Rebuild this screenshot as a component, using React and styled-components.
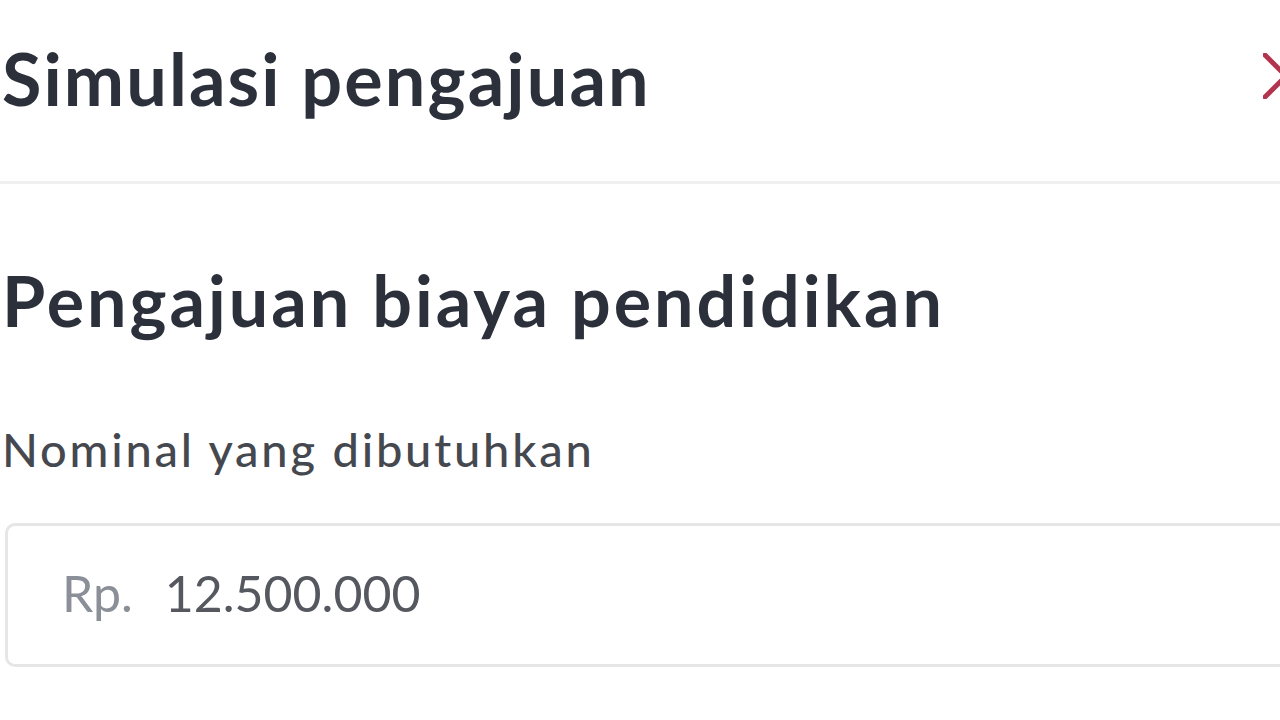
import React from "react";
import styled, { createGlobalStyle } from "styled-components";

const GlobalStyle = createGlobalStyle`
  html, body {
    margin: 0;
    padding: 0;
    background: #ffffff;
    overflow: hidden;
  }

  body {
    font-family: Lato, "Open Sans", sans-serif;
  }
`;

const Modal = styled.div`
  width: 1340px;
  background: #ffffff;
`;

const Header = styled.div`
  height: 184px;
  display: flex;
  align-items: center;
  justify-content: space-between;
  padding: 0 29px 26px 2px;
  box-sizing: border-box;
  border-bottom: 3px solid #efefef;
`;

const Title = styled.h1`
  margin: 0;
  font-size: 72px;
  line-height: 1;
  font-weight: 700;
  color: #2c303b;
  letter-spacing: 2.1px;
`;

const CloseButton = styled.button`
  width: 50px;
  height: 50px;
  padding: 0;
  border: none;
  background: none;
  display: flex;
  align-items: center;
  justify-content: center;
  margin-top: -4px;
  cursor: pointer;
`;

const Body = styled.div`
  padding: 81px 0 0 2px;
  box-sizing: border-box;
`;

const SectionTitle = styled.h2`
  margin: 0 0 91px;
  font-size: 70px;
  line-height: 1;
  font-weight: 700;
  color: #2c303b;
  letter-spacing: 3px;
`;

const Label = styled.label`
  display: block;
  margin: 0 0 50px;
  font-size: 47px;
  line-height: 1;
  font-weight: 500;
  color: #45484f;
  letter-spacing: 2.8px;
`;

const InputBox = styled.div`
  height: 144px;
  margin-left: 3px;
  display: flex;
  align-items: center;
  padding: 0 0 4px 54px;
  box-sizing: border-box;
  border: 3px solid #e6e6e6;
  border-radius: 10px;
`;

const Prefix = styled.span`
  font-size: 50px;
  color: #8b8f97;
  margin-right: 32px;
`;

const Amount = styled.span`
  font-size: 50px;
  color: #55585f;
`;

export default function App() {
  return (
    <>
      <GlobalStyle />
      <Modal>
        <Header>
          <Title>Simulasi pengajuan</Title>
          <CloseButton aria-label="Tutup">
            <svg width="46" height="46" viewBox="0 0 46 46">
              <path
                d="M2 2 L44 44 M44 2 L2 44"
                stroke="#b3344e"
                strokeWidth="5"
                strokeLinecap="round"
              />
            </svg>
          </CloseButton>
        </Header>
        <Body>
          <SectionTitle>Pengajuan biaya pendidikan</SectionTitle>
          <Label>Nominal yang dibutuhkan</Label>
          <InputBox>
            <Prefix>Rp.</Prefix>
            <Amount>12.500.000</Amount>
          </InputBox>
        </Body>
      </Modal>
    </>
  );
}
